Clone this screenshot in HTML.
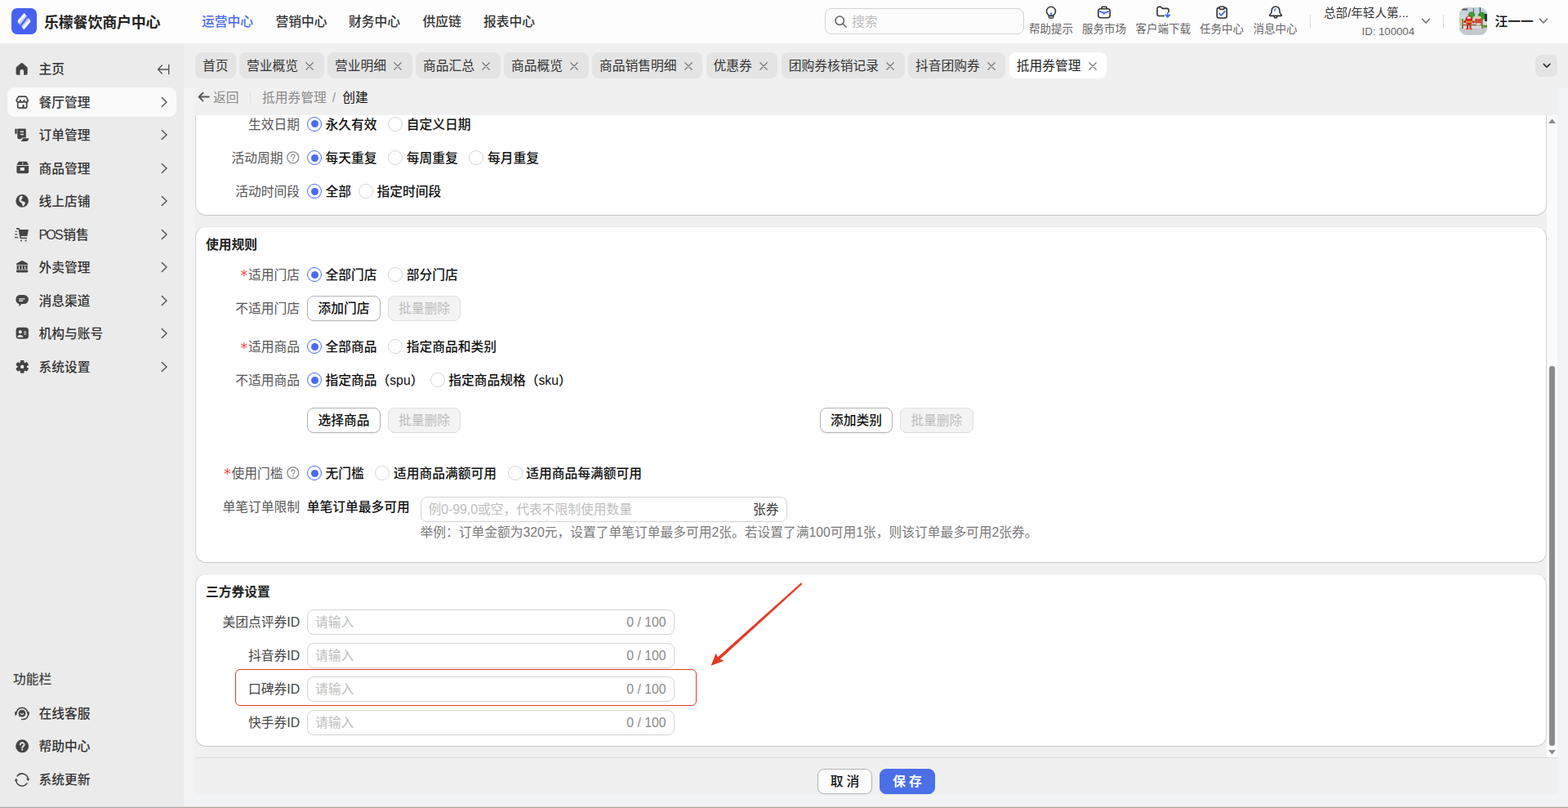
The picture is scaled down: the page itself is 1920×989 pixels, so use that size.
<!DOCTYPE html>
<html lang="zh-CN">
<head>
<meta charset="utf-8">
<title>乐檬餐饮商户中心</title>
<style>
*{box-sizing:border-box;margin:0;padding:0}
html,body{width:1920px;height:989px;overflow:hidden}
body{position:relative;background:#f2f3f5;font-family:"Liberation Sans","Noto Sans CJK SC",sans-serif;font-size:15.75px;color:#333;line-height:1}
.abs{position:absolute}
svg{display:block}
/* header */
#hdr{position:absolute;left:0;top:0;width:1920px;height:52.5px;background:#fdfdfd}
#logo{position:absolute;left:14px;top:10px;width:31px;height:32px;border-radius:7px;background:#4762f0}
#brand{position:absolute;left:54px;top:17.5px;font-size:18px;font-weight:700;color:#222;letter-spacing:-0.2px;white-space:nowrap;line-height:20px}
.nav{position:absolute;top:16.9px;font-size:15.75px;font-weight:500;color:#333;line-height:20px;white-space:nowrap}
.nav.on{color:#4a6bf2}
#search{position:absolute;left:1010px;top:10px;width:244px;height:32px;border:1px solid #d4d4d4;border-radius:8px;background:#fcfcfc}
#search span{position:absolute;left:32px;top:6px;font-size:15.75px;line-height:20px;color:#bdbdbd}
.hi{position:absolute;top:0;height:52px;text-align:center;font-size:13.5px;color:#666;white-space:nowrap}
.hi svg{position:absolute;top:5px;left:50%;margin-left:-10px}
.hi span{position:absolute;left:0;top:28px;line-height:16px}
.vsep{position:absolute;top:18px;width:1px;height:16px;background:#dcdcdc}
/* sidebar */
#side{position:absolute;left:0;top:52.5px;width:225px;height:936.5px;background:#ebebeb}
.mi{position:absolute;left:9px;width:207px;height:36px;border-radius:9px;font-size:15.75px;font-weight:500;color:#333}
.mi.on{background:#fafafa}
.mi svg.ic{position:absolute;left:9px;top:9px}
.mi span{position:absolute;left:38.4px;top:9px;line-height:20px;white-space:nowrap}
.mi svg.ch{position:absolute;left:187px;top:11px}
/* tabs */
#tabbar{position:absolute;left:225px;top:52.5px;width:1695px;height:54.5px;background:#f0f0f0}
#panel{position:absolute;left:239px;top:107px;width:1668px;height:865px;background:#f0f0f0}
.tab{position:absolute;top:64px;height:32px;border-radius:8px;background:#e4e4e4;font-size:15.75px;color:#333;line-height:20px;padding:7px 0 0 9px;white-space:nowrap}
.tab.on{background:#fff;color:#222}
.tab svg{position:absolute;right:12.5px;top:12px}
/* content */
.card{position:absolute;left:239px;width:1655px;background:#fff;border:1px solid #d2d2d2;border-top-color:#e6e6e6;border-bottom-color:#c8c8c8;border-radius:13.5px}
.lbl{position:absolute;text-align:right;white-space:nowrap;color:#555;line-height:20px;font-size:15.75px}
.lbl i{font-style:normal;font-family:"DejaVu Sans",sans-serif;color:#f5484b;font-size:17.5px;position:relative;top:1.4px;line-height:10px;margin-right:.8px}
.rd{position:absolute;width:18px;height:18px;border-radius:50%;border:1px solid #d6d6d6;background:#fff}
.rd.on{border-color:#4a6bf0}
.rd.on:after{content:"";position:absolute;left:3.9px;top:3.7px;width:9px;height:9px;border-radius:50%;background:#4a6bf0}
.rt{position:absolute;white-space:nowrap;color:#111;font-weight:500;line-height:20px;font-size:15.75px}
.ttl{position:absolute;left:252px;font-weight:700;color:#222;line-height:20px;white-space:nowrap;font-size:15.75px}
.btn{position:absolute;height:30.5px;border:1px solid #b4b4b4;border-radius:8px;background:#fff;color:#111;font-weight:500;font-size:15.75px;line-height:20px;padding-top:4.5px;text-align:center;white-space:nowrap;box-shadow:0 1px 2px rgba(0,0,0,.05)}
.btn.dis{background:#f3f3f3;border-color:#dedede;color:#bcbcbc;box-shadow:none;font-weight:400}
.inp{position:absolute;height:30.5px;border:1px solid #d4d4d4;border-radius:8px;background:#fff;font-size:15.75px;line-height:20px}
.inp .ph{position:absolute;left:9px;top:4.5px;color:#bebebe;white-space:nowrap}
.inp .sf{position:absolute;right:9px;top:4.5px;color:#8a8a8a;white-space:nowrap}
.q{position:absolute;width:15.5px;height:15.5px}
</style>
</head>
<body>
<!-- HEADER -->
<div id="hdr">
  <div id="logo"><svg width="31" height="32" viewBox="0 0 31 32"><defs><linearGradient id="lg1" gradientUnits="userSpaceOnUse" x1="9.500" y1="11.500" x2="15" y2="16.200"><stop offset="0" stop-color="#fff"/><stop offset=".45" stop-color="#fff"/><stop offset="1" stop-color="#fff" stop-opacity=".3"/></linearGradient><linearGradient id="lg2" gradientUnits="userSpaceOnUse" x1="15.800" y1="16.300" x2="21.300" y2="21"><stop offset="0" stop-color="#fff" stop-opacity=".3"/><stop offset=".55" stop-color="#fff"/><stop offset="1" stop-color="#fff"/></linearGradient></defs><path d="M15.600 6 19.100 9.800 10.700 20.900 8 17.500Q7 16 8 14.700z" fill="url(#lg1)"/><path d="M20.200 11.300 22.900 14.600Q23.900 16 22.900 17.300L15.300 26.200 12 22z" fill="url(#lg2)"/></svg></div>
  <div id="brand">乐檬餐饮商户中心</div>
  <div class="nav on" style="left:247px">运营中心</div>
  <div class="nav" style="left:337.5px">营销中心</div>
  <div class="nav" style="left:427px">财务中心</div>
  <div class="nav" style="left:517.5px">供应链</div>
  <div class="nav" style="left:592px">报表中心</div>
  <div id="search"><svg class="abs" style="left:10px;top:7px" width="17" height="17" viewBox="0 0 17 17" fill="none" stroke="#666" stroke-width="1.600" stroke-linecap="round"><circle cx="7.200" cy="7.200" r="5.200"/><path d="M11.200 11.200l4 4"/></svg><span>搜索</span></div>
  <div class="hi" style="left:1260px;width:54px"><svg width="20" height="20" viewBox="0 0 20 20" fill="none" stroke="#333" stroke-width="1.500" stroke-linecap="round" stroke-linejoin="round"><path d="M7.300 14.300c0-.7-.4-1.100-1.200-1.620A5.500 5.500 0 1 1 13.900 12.680c-.8.520-1.200.920-1.200 1.620z"/><path d="M7.300 14.300v1.800a1 1 0 0 0 1 1h3.400a1 1 0 0 0 1-1V14.300"/><path d="M7.800 16.300h4.400" stroke="#777" stroke-width="1.600"/><path d="M10 10.600V13.900" stroke="#4a6bf0" stroke-width="1.900" stroke-linecap="butt"/></svg><span>帮助提示</span></div>
  <div class="hi" style="left:1325px;width:54px"><svg width="20" height="20" viewBox="0 0 20 20" fill="none" stroke="#333" stroke-width="1.600" stroke-linecap="round" stroke-linejoin="round"><rect x="2.800" y="5.800" width="14.400" height="11" rx="3"/><path d="M6.900 5.800V4.700a1.500 1.500 0 0 1 1.500-1.500h3.200a1.500 1.500 0 0 1 1.500 1.500v1.100"/><path d="M5 9.100c1.600 1 3.300 1.500 5 1.500s3.400-.5 5-1.500M10 10.600v1.100" stroke="#4a6bf0" stroke-width="1.900"/></svg><span>服务市场</span></div>
  <div class="hi" style="left:1390.5px;width:67.5px"><svg width="20" height="20" viewBox="0 0 20 20" fill="none" stroke="#333" stroke-width="1.600" stroke-linecap="round" stroke-linejoin="round"><path d="M11.300 14.500H5a2 2 0 0 1-2-2V5.400a2 2 0 0 1 2-2h2.200l2.200 2h5.600a2 2 0 0 1 2 2v2.400"/><path d="M15.800 10.800v4.900M13.300 13.300l2.500 2.600 2.500-2.600" stroke="#4a6bf0" stroke-width="1.800"/></svg><span>客户端下载</span></div>
  <div class="hi" style="left:1469px;width:54px"><svg width="20" height="20" viewBox="0 0 20 20" fill="none" stroke="#333" stroke-width="1.600" stroke-linecap="round" stroke-linejoin="round"><rect x="4.200" y="4.400" width="12" height="12.600" rx="2.600"/><rect x="7.200" y="3" width="6" height="3.400" rx="1.700" fill="#fdfdfd"/><path d="M7 11.600l2.300 2.300 4.600-5" stroke="#4a6bf0" stroke-width="1.800"/></svg><span>任务中心</span></div>
  <div class="hi" style="left:1534.5px;width:54px"><svg width="20" height="20" viewBox="0 0 20 20" fill="none" stroke="#333" stroke-width="1.600" stroke-linecap="round" stroke-linejoin="round"><path d="M10 3a4.800 4.800 0 0 0-4.800 4.800c0 2.600-.6 4.200-2.200 5.400-.5.400-.2 1.200.4 1.200h13.200c.6 0 .9-.8.4-1.200-1.600-1.200-2.200-2.800-2.200-5.400A4.800 4.800 0 0 0 10 3z"/><path d="M8.100 15.600a2 2 0 0 0 3.800 0"/><path d="M8.700 8.100c.2-1.100.7-1.900 1.500-2.500" stroke="#4a6bf0" stroke-width="1.300"/></svg><span>消息中心</span></div>
  <div class="vsep" style="left:1604px"></div>
  <div class="abs" style="left:1621px;top:6px;font-size:14.6px;line-height:20px;color:#333;white-space:nowrap">总部/年轻人第...</div>
  <div class="abs" style="left:1632px;width:100px;text-align:right;top:30.700px;font-size:13.200px;line-height:16px;color:#666;white-space:nowrap">ID: 100004</div>
<svg class="abs" style="left:1739.5px;top:21.5px" width="12" height="8" viewBox="0 0 12 8" fill="none" stroke="#666" stroke-width="1.400" stroke-linecap="round" stroke-linejoin="round"><path d="M1.500 1.300l4.500 4.700 4.500-4.700"/></svg>
  <div class="vsep" style="left:1767px"></div>
  <div class="abs" id="avatar" style="left:1787px;top:9px;width:34px;height:34px;border-radius:9px;overflow:hidden"><svg width="34" height="34" viewBox="0 0 34 34"><defs><filter id="bl"><feGaussianBlur stdDeviation=".55"/></filter></defs><rect width="34" height="34" fill="#cbd8de"/><g filter="url(#bl)"><rect x="0" y="0" width="34" height="9" fill="#c3d3dc"/><rect x="3" y="1.500" width="7" height="2" fill="#555"/><rect x="16.800" y="1" width="1" height="7" fill="#555"/><rect x="24.800" y="0" width="1.200" height="6" fill="#444"/><circle cx="15" cy="9.500" r="4.300" fill="#3f9a3a"/><circle cx="27.500" cy="10.500" r="4.800" fill="#3b9436"/><rect x="31" y="8" width="3" height="11" fill="#333"/><rect x="0" y="25" width="34" height="9" fill="#c5c9cd"/><rect x="0" y="13" width="2" height="9" fill="#c9d47a"/><rect x="29" y="21.500" width="5" height="3.200" fill="#4b9a2c"/><rect x="29" y="17" width="5" height="4.500" fill="#d5dbe0"/><rect x="3" y="14" width="1.600" height="12" fill="#8a6a2c"/><rect x="27" y="14" width="1.600" height="12" fill="#8a6a2c"/><rect x="3" y="20.800" width="25.600" height="1.800" fill="#8d6e33"/><rect x="5" y="22.600" width="22" height="3" fill="#d8dcdf"/><ellipse cx="11.700" cy="16" rx="4.600" ry="5.600" fill="#d3261b"/><rect x="7.300" y="16.800" width="8.800" height="2" fill="#e09a22"/><ellipse cx="11.700" cy="12.800" rx="2.300" ry="1.300" fill="#f2e6d8"/><path d="M10.500 8.500l1.200 2 1.200-2z" fill="#d33"/><rect x="9" y="21.500" width="2" height="4.500" fill="#c8201a"/><rect x="12.500" y="21.500" width="2" height="4.500" fill="#c8201a"/><rect x="8" y="26" width="3.300" height="1.200" fill="#ff3a1c"/><rect x="12.300" y="26" width="3.300" height="1.200" fill="#ff3a1c"/><ellipse cx="23.300" cy="16.500" rx="4.500" ry="4.800" fill="#d2463e"/><ellipse cx="23.300" cy="12.500" rx="3.500" ry="1.800" fill="#e9c9a8"/><rect x="20.800" y="19.500" width="5" height="2" fill="#f3eeee"/><circle cx="18.300" cy="12.800" r="1.800" fill="#cdd9a6"/><circle cx="6.500" cy="17.500" r="1.500" fill="#b52b22"/><circle cx="17.300" cy="18" r="1.500" fill="#b52b22"/></g></svg></div>
  <div class="abs" style="left:1830.5px;top:16.600px;font-size:15.75px;font-weight:500;line-height:20px;color:#111;white-space:nowrap">汪一一</div>
<svg class="abs" style="left:1884px;top:21.5px" width="12" height="8" viewBox="0 0 12 8" fill="none" stroke="#666" stroke-width="1.400" stroke-linecap="round" stroke-linejoin="round"><path d="M1.500 1.300l4.500 4.700 4.500-4.700"/></svg>
</div>
<!-- SIDEBAR -->
<div id="side">
<div class="mi" style="top:13.5px"><svg class="ic" width="18" height="18" viewBox="0 0 18 18"><path d="M8.050 2.100a1.450 1.450 0 0 1 1.900 0l5.350 4.600a1.800 1.800 0 0 1 .6 1.350V14.900a1.700 1.700 0 0 1-1.700 1.700H11.300V12.200a2.300 2.300 0 0 0-4.600 0v4.400H3.500a1.700 1.700 0 0 1-1.700-1.700V8.050a1.800 1.800 0 0 1 .6-1.350z" fill="#444" transform="translate(-.2 .2)"/></svg><span>主页</span><svg class="abs" style="left:183px;top:11.700px" width="17" height="14" viewBox="0 0 17 14" fill="none" stroke="#555" stroke-width="1.400" stroke-linecap="round" stroke-linejoin="round"><path d="M14.700 1.500v11"/><path d="M13.500 7H1.500M6.300 2 1.500 7l4.800 5"/></svg></div>
<div class="mi on" style="top:54.0px"><svg class="ic" width="18" height="18" viewBox="0 0 18 18"><g fill="none" stroke="#444" stroke-width="1.700" stroke-linejoin="round" stroke-linecap="round"><path d="M2.200 6.700 4.200 2.900a1.500 1.500 0 0 1 1.300-.8h7.400a1.500 1.500 0 0 1 1.300.8L16.200 6.700a2.330 2.330 0 0 1-4.670 0 2.330 2.330 0 0 1-4.660 0 2.330 2.330 0 0 1-4.670 0z"/><path d="M3.700 10.200V14.700a1.500 1.500 0 0 0 1.500 1.500h8a1.500 1.500 0 0 0 1.500-1.500V10.200"/></g><rect x="9.500" y="12.100" width="2.100" height="4.300" fill="#444"/></svg><span>餐厅管理</span><svg class="ch" width="10" height="14" viewBox="0 0 10 14" fill="none" stroke="#555" stroke-width="1.500" stroke-linecap="round" stroke-linejoin="round"><path d="M2.300 1.500 8 7 2.300 12.500"/></svg></div>
<div class="mi" style="top:94.5px"><svg class="ic" width="18" height="18" viewBox="0 0 18 18"><g fill="#444"><rect x=".3" y="1.400" width="2.400" height="6.600" rx="1"/><path d="M3.300 1.400H12.400a1.400 1.400 0 0 1 1.400 1.400V12.600H9.200L7.500 14.200H5.200a1.900 1.900 0 0 1-1.900-1.900z"/><path d="M9.900 13.300H17.200c0 2.100-1.100 3.600-3 3.600H7.200c1.500-.7 2.300-1.900 2.700-3.600z"/></g><path d="M6.800 5.300h4.200M6.800 8.600h4.200" stroke="#ebebeb" stroke-width="1.500"/></svg><span>订单管理</span><svg class="ch" width="10" height="14" viewBox="0 0 10 14" fill="none" stroke="#555" stroke-width="1.500" stroke-linecap="round" stroke-linejoin="round"><path d="M2.300 1.500 8 7 2.300 12.500"/></svg></div>
<div class="mi" style="top:135.0px"><svg class="ic" width="18" height="18" viewBox="0 0 18 18"><g fill="#444"><path d="M5.600.8h8.300a1.500 1.500 0 0 1 1.300.8L17.100 5H2.400L4.300 1.600A1.500 1.500 0 0 1 5.600.8z"/><path d="M2.400 5.900H17.100V13.400a1.800 1.800 0 0 1-1.800 1.800H4.200a1.800 1.800 0 0 1-1.800-1.800z"/></g><path d="M9.750 1.500V4.700" stroke="#ebebeb" stroke-width=".8"/><rect x="6.700" y="8" width="5.200" height="3.800" fill="#ebebeb"/></svg><span>商品管理</span><svg class="ch" width="10" height="14" viewBox="0 0 10 14" fill="none" stroke="#555" stroke-width="1.500" stroke-linecap="round" stroke-linejoin="round"><path d="M2.300 1.500 8 7 2.300 12.500"/></svg></div>
<div class="mi" style="top:175.5px"><svg class="ic" width="18" height="18" viewBox="0 0 18 18"><circle cx="9.100" cy="8.900" r="7.800" fill="#444"/><path d="M7.100 3C8.500 2.600 9.600 3 10 3.600 9.200 4.600 9.300 5.600 8.800 6.400 8.300 7.200 7.500 7.400 7.700 8.100 7.900 8.900 8.600 8.900 9.300 9.200c1.500.5 2.900.7 3.400 1.600.5 1.200-.3 2.500-1.100 3.400-.6.7-1.100 1.300-1.700 1.100-.6-.3-.3-1.800-.8-2.800C8.500 11.500 7.300 11.200 6.600 10.300 5.800 9.300 5.300 8 5.400 6.900 5.500 5.700 5.700 4.900 6 4.200z" fill="#ebebeb"/></svg><span>线上店铺</span><svg class="ch" width="10" height="14" viewBox="0 0 10 14" fill="none" stroke="#555" stroke-width="1.500" stroke-linecap="round" stroke-linejoin="round"><path d="M2.300 1.500 8 7 2.300 12.500"/></svg></div>
<div class="mi" style="top:216.0px"><svg class="ic" width="18" height="18" viewBox="0 0 18 18"><g fill="#444"><path d="M5.400 3.100H16.900L15.400 10.900H6.800z"/><path d="M2.100 1.100H5a.8.8 0 0 1 .8.650L8 13.300l-1.500.3L4.500 2.700H2.100z"/><path d="M6.600 12.700h8.400v1.500H6.600z"/><circle cx="7.900" cy="16.600" r="1"/><circle cx="13.600" cy="16.600" r="1"/><path d="M.7 4.700h1.900V6H.7zM.3 8.300h2.900v1.300H.3zM0 11.900h4.200v1.300H0z"/></g></svg><span><b style="font-weight:500;font-size:16px;letter-spacing:-1.700px;margin-right:1.200px">POS</b>销售</span><svg class="ch" width="10" height="14" viewBox="0 0 10 14" fill="none" stroke="#555" stroke-width="1.500" stroke-linecap="round" stroke-linejoin="round"><path d="M2.300 1.500 8 7 2.300 12.500"/></svg></div>
<div class="mi" style="top:256.5px"><svg class="ic" width="18" height="18" viewBox="0 0 18 18"><g fill="#444"><path d="M8.500 1.100a1.300 1.300 0 0 1 1.200 0l5.800 3.200a1.300 1.300 0 0 1 .7 1.150V6.300H2V5.450a1.300 1.300 0 0 1 .7-1.150z"/><path d="M2.600 6.900h13v5h-13z"/><path d="M2.800 12.200h12.600a.8.800 0 0 1 .8.800v1.600a.8.800 0 0 1-.8.800H2.800a.8.800 0 0 1-.8-.8V13a.8.800 0 0 1 .8-.8z"/></g><path d="M5.500 7.600v3.800M9.100 7.600v3.800M12.700 7.600v3.800" stroke="#ebebeb" stroke-width="1.100"/><path d="M2 12.100h14.200" stroke="#ebebeb" stroke-width=".5"/></svg><span>外卖管理</span><svg class="ch" width="10" height="14" viewBox="0 0 10 14" fill="none" stroke="#555" stroke-width="1.500" stroke-linecap="round" stroke-linejoin="round"><path d="M2.300 1.500 8 7 2.300 12.500"/></svg></div>
<div class="mi" style="top:297.0px"><svg class="ic" width="18" height="18" viewBox="0 0 18 18"><path d="M6.800 2.100h4.600a5.500 5.500 0 0 1 0 11H8.600L5.400 16V12.900A5.500 5.500 0 0 1 6.800 2.100z" fill="#444"/><path d="M5.700 6.900h6.300M5.700 9.200h4.100" stroke="#ebebeb" stroke-width="1.400" stroke-linecap="round"/></svg><span>消息渠道</span><svg class="ch" width="10" height="14" viewBox="0 0 10 14" fill="none" stroke="#555" stroke-width="1.500" stroke-linecap="round" stroke-linejoin="round"><path d="M2.300 1.500 8 7 2.300 12.500"/></svg></div>
<div class="mi" style="top:337.5px"><svg class="ic" width="18" height="18" viewBox="0 0 18 18"><rect x="1.600" y="1.800" width="15.300" height="14" rx="3.600" fill="#444"/><circle cx="6.800" cy="7.300" r="2" fill="#ebebeb"/><path d="M3.100 13.800c.2-1.900 1.700-2.900 3.700-2.900s3.500 1 3.700 2.900z" fill="#ebebeb"/><path d="M11.700 7.300h2.100M11.700 9.900h2.100" stroke="#ebebeb" stroke-width="1.300" stroke-linecap="round"/></svg><span>机构与账号</span><svg class="ch" width="10" height="14" viewBox="0 0 10 14" fill="none" stroke="#555" stroke-width="1.500" stroke-linecap="round" stroke-linejoin="round"><path d="M2.300 1.500 8 7 2.300 12.500"/></svg></div>
<div class="mi" style="top:378.0px"><svg class="ic" width="18" height="18" viewBox="0 0 18 18"><path d="M7.73 4.12 L7.81 1.84 L10.59 1.84 L10.67 4.12 L12.60 5.24 L14.62 4.16 L16.01 6.57 L14.07 7.78 L14.07 10.02 L16.01 11.23 L14.62 13.64 L12.60 12.56 L10.67 13.68 L10.59 15.96 L7.81 15.96 L7.73 13.68 L5.80 12.56 L3.78 13.64 L2.39 11.23 L4.33 10.02 L4.33 7.78 L2.39 6.57 L3.78 4.16 L5.80 5.24z" fill="#444" stroke="#444" stroke-width="1.800" stroke-linejoin="round"/><circle cx="9.200" cy="8.900" r="2.200" fill="#ebebeb"/></svg><span>系统设置</span><svg class="ch" width="10" height="14" viewBox="0 0 10 14" fill="none" stroke="#555" stroke-width="1.500" stroke-linecap="round" stroke-linejoin="round"><path d="M2.300 1.500 8 7 2.300 12.500"/></svg></div>
<div class="abs" style="left:16px;top:769.0px;font-size:15.75px;line-height:20px;color:#444;font-weight:500">功能栏</div>
<div class="mi" style="top:802.5px"><svg class="ic" width="18" height="18" viewBox="0 0 18 18"><circle cx="9" cy="9.200" r="4.400" fill="#444"/><path d="M5.800 11.300 5 13.600 7.600 12.600z" fill="#444"/><path d="M7.400 9.200c.4 1 .9 1.400 1.600 1.400s1.200-.4 1.600-1.400" fill="none" stroke="#ebebeb" stroke-width="1.200" stroke-linecap="round"/><g fill="none" stroke="#444" stroke-width="1.500" stroke-linecap="round"><path d="M2 9.300A7 7 0 0 1 16 9.300"/><path d="M16.200 11.600C15.600 15 12.600 16.700 8.700 16.500"/></g><rect x=".2" y="7.100" width="2.100" height="4.700" rx="1" fill="#444"/><rect x="15.700" y="7.100" width="2.100" height="4.700" rx="1" fill="#444"/></svg><span>在线客服</span></div>
<div class="mi" style="top:842.5px"><svg class="ic" width="18" height="18" viewBox="0 0 18 18"><circle cx="9.200" cy="9.300" r="8" fill="#444"/><path d="M6.800 7.400a2.400 2.400 0 1 1 3.700 2c-.8.500-1.250.950-1.250 1.850" fill="none" stroke="#ebebeb" stroke-width="1.900" stroke-linecap="round"/><circle cx="9.250" cy="13.700" r="1.100" fill="#ebebeb"/></svg><span>帮助中心</span></div>
<div class="mi" style="top:883.5px"><svg class="ic" width="18" height="18" viewBox="0 0 18 18"><g fill="none" stroke="#444" stroke-width="1.500" stroke-linecap="round"><path d="M3.100 5A7.300 7.300 0 0 1 16.300 8.400"/><path d="M15 13.900A7.300 7.300 0 0 1 1.800 10.500"/></g><path d="M14.300 8.100h4.100l-2.050 3.100z" fill="#444"/><path d="M-.3 10.700h4.100L1.750 7.600z" fill="#444"/></svg><span>系统更新</span></div>
</div>
<!-- TABS -->
<div id="tabbar"></div>
<div id="panel"></div>
<div class="tab" style="left:239px;width:49.5px">首页</div>
<div class="tab" style="left:293.0px;width:103.5px">营业概览<svg width="10" height="10" viewBox="0 0 10 10" fill="none" stroke="#777" stroke-width="1.250" stroke-linecap="round"><path d="M.8.800l8.400 8.400M9.200.800.800 9.200"/></svg></div>
<div class="tab" style="left:401.0px;width:103.5px">营业明细<svg width="10" height="10" viewBox="0 0 10 10" fill="none" stroke="#777" stroke-width="1.250" stroke-linecap="round"><path d="M.8.800l8.400 8.400M9.200.800.800 9.200"/></svg></div>
<div class="tab" style="left:509.0px;width:103.5px">商品汇总<svg width="10" height="10" viewBox="0 0 10 10" fill="none" stroke="#777" stroke-width="1.250" stroke-linecap="round"><path d="M.8.800l8.400 8.400M9.200.800.800 9.200"/></svg></div>
<div class="tab" style="left:617.0px;width:103.5px">商品概览<svg width="10" height="10" viewBox="0 0 10 10" fill="none" stroke="#777" stroke-width="1.250" stroke-linecap="round"><path d="M.8.800l8.400 8.400M9.200.800.800 9.200"/></svg></div>
<div class="tab" style="left:725.0px;width:135.0px">商品销售明细<svg width="10" height="10" viewBox="0 0 10 10" fill="none" stroke="#777" stroke-width="1.250" stroke-linecap="round"><path d="M.8.800l8.400 8.400M9.200.800.800 9.200"/></svg></div>
<div class="tab" style="left:864.5px;width:87.75px">优惠券<svg width="10" height="10" viewBox="0 0 10 10" fill="none" stroke="#777" stroke-width="1.250" stroke-linecap="round"><path d="M.8.800l8.400 8.400M9.200.800.800 9.200"/></svg></div>
<div class="tab" style="left:956.75px;width:150.75px">团购券核销记录<svg width="10" height="10" viewBox="0 0 10 10" fill="none" stroke="#777" stroke-width="1.250" stroke-linecap="round"><path d="M.8.800l8.400 8.400M9.200.800.800 9.200"/></svg></div>
<div class="tab" style="left:1112.0px;width:119.25px">抖音团购券<svg width="10" height="10" viewBox="0 0 10 10" fill="none" stroke="#777" stroke-width="1.250" stroke-linecap="round"><path d="M.8.800l8.400 8.400M9.200.800.800 9.200"/></svg></div>
<div class="tab on" style="left:1235.75px;width:119.25px">抵用券管理<svg width="10" height="10" viewBox="0 0 10 10" fill="none" stroke="#777" stroke-width="1.250" stroke-linecap="round"><path d="M.8.800l8.400 8.400M9.200.800.800 9.200"/></svg></div>
<div class="abs" style="left:1880px;top:67px;width:27px;height:27px;border-radius:7px;background:#e4e4e4"><svg class="abs" style="left:8.500px;top:10.300px" width="10" height="7" viewBox="0 0 10 7" fill="none" stroke="#333" stroke-width="1.700" stroke-linecap="round" stroke-linejoin="round"><path d="M1.200 1.300l3.800 3.800 3.800-3.800"/></svg></div>
<svg class="abs" style="left:242.300px;top:112px" width="15" height="13" viewBox="0 0 15 13" fill="none" stroke="#555" stroke-width="1.900" stroke-linecap="round" stroke-linejoin="round"><path d="M13.700 6.500H1.800M6.400 1.700l-4.700 4.800 4.700 4.800"/></svg>
<div class="abs" style="left:261px;top:110px;line-height:20px;color:#8a8a8a;white-space:nowrap">返回</div>
<div class="abs" style="left:306px;top:112px;width:1px;height:14px;background:#e0e0e0"></div>
<div class="abs" style="left:321px;top:110px;line-height:20px;color:#8a8a8a;white-space:nowrap">抵用券管理<span style="margin:0 8px 0 7px;color:#999">/</span><span style="color:#111">创建</span></div>
<!-- CONTENT -->
<div class="card" style="top:141px;height:123px;border-top:none;border-radius:0 0 13.500px 13.500px"></div>
<div class="lbl" style="right:1553px;top:142.7px">生效日期</div>
<div class="rd on" style="left:375.75px;top:142.7px"></div>
<div class="rt" style="left:398.5px;top:142.7px">永久有效</div>
<div class="rd" style="left:475.0px;top:142.7px"></div>
<div class="rt" style="left:497.75px;top:142.7px">自定义日期</div>
<div class="lbl" style="right:1573.5px;top:184.0px">活动周期</div>
<svg class="q" style="left:351.25px;top:185.25px" viewBox="0 0 16 16" fill="none" stroke="#8a8a8a" stroke-width="1.300" stroke-linecap="round"><circle cx="8" cy="8" r="7.200"/><path d="M5.900 6.400a2.150 2.150 0 1 1 3.300 1.800c-.8.500-1.100.9-1.100 1.700"/><circle cx="8.050" cy="11.900" r=".500" fill="#8a8a8a" stroke-width=".6"/></svg>
<div class="rd on" style="left:375.75px;top:184px"></div>
<div class="rt" style="left:398.5px;top:184.0px">每天重复</div>
<div class="rd" style="left:475.0px;top:184px"></div>
<div class="rt" style="left:497.75px;top:184.0px">每周重复</div>
<div class="rd" style="left:574.25px;top:184px"></div>
<div class="rt" style="left:597.0px;top:184.0px">每月重复</div>
<div class="lbl" style="right:1553px;top:225.0px">活动时间段</div>
<div class="rd on" style="left:375.75px;top:225px"></div>
<div class="rt" style="left:398.5px;top:225.0px">全部</div>
<div class="rd" style="left:438.8px;top:225px"></div>
<div class="rt" style="left:461.55px;top:225.0px">指定时间段</div>
<div class="card" style="top:277px;height:411.700px"></div>
<div class="ttl" style="top:290.0px">使用规则</div>
<div class="lbl" style="right:1553px;top:327.0px"><i>*</i>适用门店</div>
<div class="rd on" style="left:375.75px;top:327px"></div>
<div class="rt" style="left:398.5px;top:327.0px">全部门店</div>
<div class="rd" style="left:475.0px;top:327px"></div>
<div class="rt" style="left:497.75px;top:327.0px">部分门店</div>
<div class="lbl" style="right:1553px;top:368.0px">不适用门店</div>
<div class="btn" style="left:376px;top:362px;width:90px">添加门店</div>
<div class="btn dis" style="left:475px;top:362px;width:89px">批量删除</div>
<div class="lbl" style="right:1553px;top:415.25px"><i>*</i>适用商品</div>
<div class="rd on" style="left:375.75px;top:415.25px"></div>
<div class="rt" style="left:398.5px;top:415.25px">全部商品</div>
<div class="rd" style="left:475.0px;top:415.25px"></div>
<div class="rt" style="left:497.75px;top:415.25px">指定商品和类别</div>
<div class="lbl" style="right:1553px;top:456.25px">不适用商品</div>
<div class="rd on" style="left:375.75px;top:456.25px"></div>
<div class="rt" style="left:398.5px;top:456.25px">指定商品（spu）</div>
<div class="rd" style="left:526.5px;top:456.25px"></div>
<div class="rt" style="left:549.25px;top:456.25px">指定商品规格（sku）</div>
<div class="btn" style="left:376px;top:499px;width:90px">选择商品</div>
<div class="btn dis" style="left:475px;top:499px;width:89px">批量删除</div>
<div class="btn" style="left:1004px;top:499px;width:89px">添加类别</div>
<div class="btn dis" style="left:1102px;top:499px;width:89.5px">批量删除</div>
<div class="lbl" style="right:1573.5px;top:570.0px"><i>*</i>使用门槛</div>
<svg class="q" style="left:351.25px;top:571.25px" viewBox="0 0 16 16" fill="none" stroke="#8a8a8a" stroke-width="1.300" stroke-linecap="round"><circle cx="8" cy="8" r="7.200"/><path d="M5.900 6.400a2.150 2.150 0 1 1 3.300 1.800c-.8.500-1.100.9-1.100 1.700"/><circle cx="8.050" cy="11.900" r=".500" fill="#8a8a8a" stroke-width=".6"/></svg>
<div class="rd on" style="left:375.75px;top:570px"></div>
<div class="rt" style="left:398.5px;top:570.0px">无门槛</div>
<div class="rd" style="left:459.25px;top:570px"></div>
<div class="rt" style="left:482.0px;top:570.0px">适用商品满额可用</div>
<div class="rd" style="left:621.5px;top:570px"></div>
<div class="rt" style="left:644.25px;top:570.0px">适用商品每满额可用</div>
<div class="lbl" style="right:1553px;top:611.0px">单笔订单限制</div>
<div class="rt" style="left:375.75px;top:611.0px">单笔订单最多可用</div>
<div class="inp" style="left:514.500px;top:608px;width:449px"><span class="ph" style="top:5.200px">例0-99,0或空，代表不限制使用数量</span><span class="sf" style="color:#333;top:4.800px">张券</span></div>
<div class="abs" style="left:514.500px;top:642.25px;line-height:20px;color:#7a7a7a;white-space:nowrap">举例：订单金额为320元，设置了单笔订单最多可用2张。若设置了满100可用1张，则该订单最多可用2张券。</div>
<div class="card" style="top:701.500px;height:212px"></div>
<div class="ttl" style="top:714.75px">三方券设置</div>
<div class="lbl" style="right:1553px;top:751.8000000000001px;color:#444">美团点评券ID</div>
<div class="inp" style="left:376px;top:746.35px;width:449.500px"><span class="ph">请输入</span><span class="sf">0 / 100</span></div>
<div class="lbl" style="right:1553px;top:792.7px;color:#444">抖音券ID</div>
<div class="inp" style="left:376px;top:787.25px;width:449.500px"><span class="ph">请输入</span><span class="sf">0 / 100</span></div>
<div class="lbl" style="right:1553px;top:833.6px;color:#444">口碑券ID</div>
<div class="inp" style="left:376px;top:828.15px;width:449.500px"><span class="ph">请输入</span><span class="sf">0 / 100</span></div>
<div class="lbl" style="right:1553px;top:874.6px;color:#444">快手券ID</div>
<div class="inp" style="left:376px;top:869.15px;width:449.500px"><span class="ph">请输入</span><span class="sf">0 / 100</span></div>
<div class="abs" style="left:288px;top:819px;width:565px;height:44.500px;border:1px solid #e8392c;border-radius:6px"></div>
<svg class="abs" style="left:860px;top:705px" width="130" height="120" viewBox="860 705 130 120"><path d="M981 713.700 982 714.800 879.400 808.600 877.300 806.300z" fill="#e23a26" stroke="#e23a26" stroke-width=".9" stroke-linejoin="round"/><path d="M870.600 814.800 876.600 799.800 880.300 806.200 886.800 808.800z" fill="#e23a26"/></svg>
<div class="abs" style="left:1894px;top:141px;width:13px;height:786px;background:#fafafa"></div>
<svg class="abs" style="left:1896px;top:145px" width="9" height="6" viewBox="0 0 9 6"><path d="M0 6 4.500 .5 9 6z" fill="#8a8a8a"/></svg>
<div class="abs" style="left:1897px;top:448px;width:6.500px;height:465px;border-radius:3.250px;background:#8c8c8c"></div>
<svg class="abs" style="left:1896px;top:917.500px" width="9" height="6" viewBox="0 0 9 6"><path d="M0 0 4.500 5.500 9 0z" fill="#8a8a8a"/></svg>
<div class="abs" style="left:239px;top:927px;width:1668px;height:1px;background:#dcdcdc"></div>
<div class="btn" style="left:1001px;top:941.300px;width:66.800px;font-weight:500;letter-spacing:4px;padding-left:4px">取消</div>
<div class="btn" style="left:1076.800px;top:941.300px;width:68.200px;font-weight:700;letter-spacing:4px;padding-left:4px;background:#4a6fe8;border-color:#4a6fe8;color:#fff">保存</div>
<div class="abs" style="left:0;top:987px;width:1920px;height:2px;background:linear-gradient(#dedcda 0,#dedcda 45%,#aaa6a3 55%,#aaa6a3 100%)"></div>
</body>
</html>
